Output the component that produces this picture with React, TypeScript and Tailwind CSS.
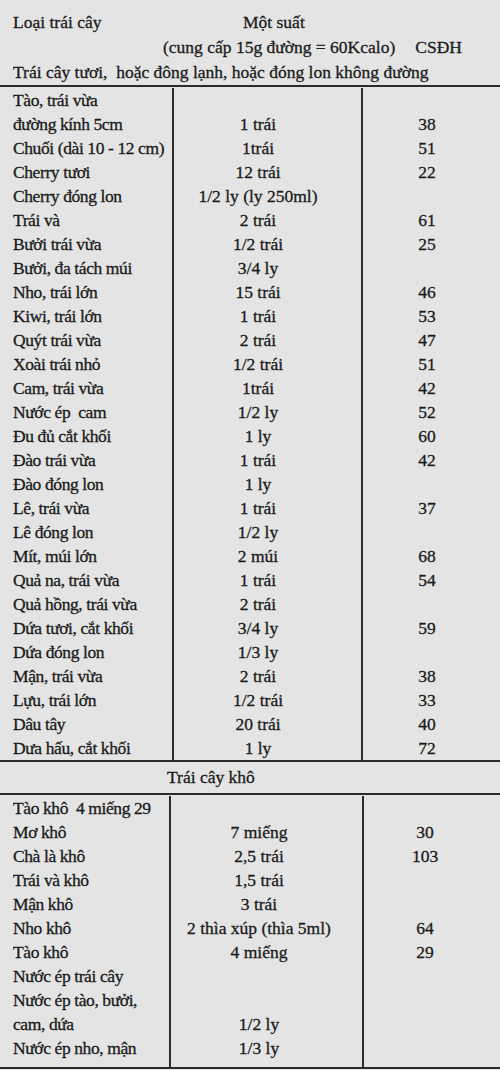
const fresh: [string, string, string][] = [
  ["Tào, trái vừa", "", ""],
  ["đường kính 5cm", "1 trái", "38"],
  ["Chuối (dài 10 - 12 cm)", "1trái", "51"],
  ["Cherry tươi", "12 trái", "22"],
  ["Cherry đóng lon", "1/2 ly (ly 250ml)", ""],
  ["Trái và", "2 trái", "61"],
  ["Bưởi trái vừa", "1/2 trái", "25"],
  ["Bưởi, đa tách múi", "3/4 ly", ""],
  ["Nho, trái lớn", "15 trái", "46"],
  ["Kiwi, trái lớn", "1 trái", "53"],
  ["Quýt trái vừa", "2 trái", "47"],
  ["Xoài trái nhỏ", "1/2 trái", "51"],
  ["Cam, trái vừa", "1trái", "42"],
  ["Nước ép  cam", "1/2 ly", "52"],
  ["Đu đủ cắt khối", "1 ly", "60"],
  ["Đào trái vừa", "1 trái", "42"],
  ["Đào đóng lon", "1 ly", ""],
  ["Lê, trái vừa", "1 trái", "37"],
  ["Lê đóng lon", "1/2 ly", ""],
  ["Mít, múi lớn", "2 múi", "68"],
  ["Quả na, trái vừa", "1 trái", "54"],
  ["Quả hồng, trái vừa", "2 trái", ""],
  ["Dứa tươi, cắt khối", "3/4 ly", "59"],
  ["Dứa đóng lon", "1/3 ly", ""],
  ["Mận, trái vừa", "2 trái", "38"],
  ["Lựu, trái lớn", "1/2 trái", "33"],
  ["Dâu tây", "20 trái", "40"],
  ["Dưa hấu, cắt khối", "1 ly", "72"],
];

const dried: [string, string, string][] = [
  ["Tào khô  4 miếng 29", "", ""],
  ["Mơ khô", "7 miếng", "30"],
  ["Chà là khô", "2,5 trái", "103"],
  ["Trái và khô", "1,5 trái", ""],
  ["Mận khô", "3 trái", ""],
  ["Nho khô", "2 thìa xúp (thìa 5ml)", "64"],
  ["Tào khô", "4 miếng", "29"],
  ["Nước ép trái cây", "", ""],
  ["Nước ép tào, bưởi,", "", ""],
  ["cam, dứa", "1/2 ly", ""],
  ["Nước ép nho, mận", "1/3 ly", ""],
];

const Line = ({ children }: { children: React.ReactNode }) => (
  <div className="h-6 leading-6 whitespace-pre">{children || "\u00a0"}</div>
);

// three columns of 24px lines; borders between columns run the full height
const Section = ({
  rows,
  widths,
  pads,
  bottom,
}: {
  rows: [string, string, string][];
  widths: [string, string];
  pads: [string, string];
  bottom: string;
}) => (
  <div className="flex pt-px">
    <div className={`${widths[0]} shrink-0 border-r-2 border-[#2b2b2b] pl-[13px] tracking-[-0.4px] ${bottom}`}>
      {rows.map((r, i) => (
        <Line key={i}>{r[0]}</Line>
      ))}
    </div>
    <div className={`${widths[1]} shrink-0 border-r-2 border-[#2b2b2b] text-center ${pads[0]} ${bottom}`}>
      {rows.map((r, i) => (
        <Line key={i}>{r[1]}</Line>
      ))}
    </div>
    <div className={`flex-1 text-center ${pads[1]} ${bottom}`}>
      {rows.map((r, i) => (
        <Line key={i}>{r[2]}</Line>
      ))}
    </div>
  </div>
);

export default function App() {
  return (
    <div className="w-[500px] h-[1070px] bg-[#e4e4e4] text-[#1a1a1a] text-[17.5px] font-['Liberation_Serif','DejaVu_Serif',serif] [-webkit-text-stroke:0.3px_#1a1a1a] overflow-hidden">
      {/* header */}
      <div className="pt-[10px] h-[85px]">
        <div className="flex h-[25px] leading-[25px]">
          <span className="w-[243px] pl-[13px]">Loại trái cây</span>
          <span>Một suất</span>
        </div>
        <div className="flex h-[25px] leading-[25px]">
          <span className="pl-[163px] whitespace-nowrap">(cung cấp 15g đường = 60Kcalo)</span>
          <span className="ml-auto pr-[38px]">CSĐH</span>
        </div>
        <div className="h-[25px] leading-[25px] pl-[13px] whitespace-pre">
          Trái cây tươi,  hoặc đông lạnh, hoặc đóng lon không đường
        </div>
      </div>

      <div className="border-t-2 border-[#2b2b2b]">
        <Section rows={fresh} widths={["w-[174px]", "w-[189px]"]} pads={["pr-[19px]", "pr-[9px]"]} bottom="pb-0" />
      </div>

      <div className="border-t-2 border-b-2 border-[#2b2b2b] h-[35px] leading-[31px] pl-[167px]">
        Trái cây khô
      </div>

      <div className="border-b-2 border-[#2b2b2b]">
        <Section rows={dried} widths={["w-[171px]", "w-[193px]"]} pads={["pr-[15px]", "pr-[14px]"]} bottom="pb-[7px]" />
      </div>
    </div>
  );
}
